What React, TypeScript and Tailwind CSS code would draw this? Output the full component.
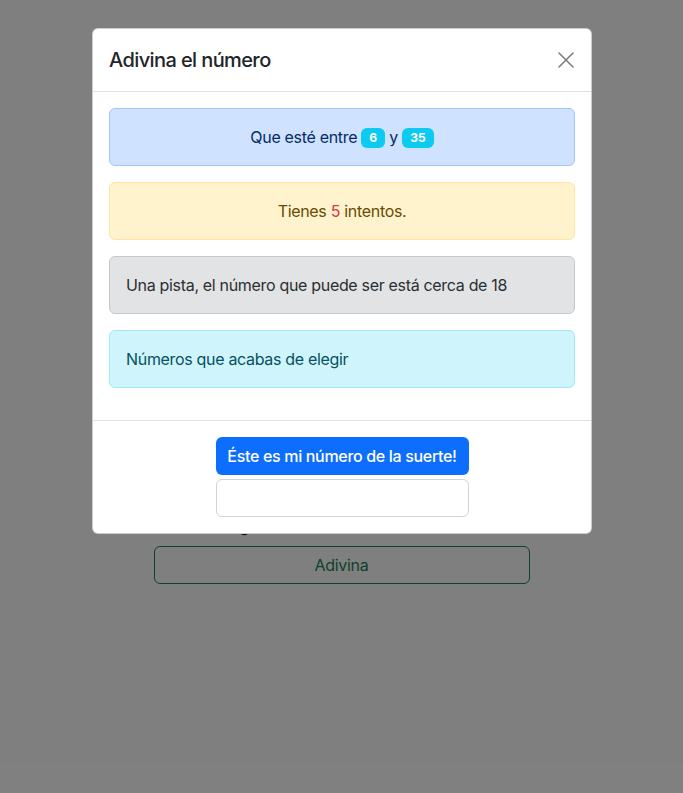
import React from "react";

const font = { fontFamily: "Inter, 'Noto Sans', sans-serif" };

function CloseIcon() {
  return (
    <svg width="16" height="16" viewBox="0 0 16 16" fill="none">
      <path d="M1 1L15 15M15 1L1 15" stroke="#000" strokeWidth="1.6" strokeLinecap="round" />
    </svg>
  );
}

export default function App() {
  return (
    <div className="relative h-[793px] overflow-hidden bg-white text-[#212529] tracking-[-0.02em]" style={font}>
      {/* page behind the modal */}
      <div className="mx-auto w-[376px] pt-[514px]">
        <p className="text-base leading-6 pl-[2px]">Número elegido</p>
        <button className="mt-2 h-[38px] w-full rounded-md border border-[#198754] text-base text-[#198754]">
          Adivina
        </button>
      </div>

      {/* backdrop */}
      <div className="absolute inset-0 bg-black/50" />

      {/* modal */}
      <div className="absolute inset-x-0 top-7 flex justify-center pl-[1px]">
        <div className="w-[500px] rounded-md border border-black/20 bg-white">
          <div className="flex items-center justify-between border-b border-[#dee2e6] p-4">
            <h5 className="text-[20px] font-medium leading-[30px] tracking-[-0.03em] text-[#212529]">Adivina el número</h5>
            <button className="mr-[-3px] p-1 opacity-50">
              <CloseIcon />
            </button>
          </div>

          <div className="flex flex-col gap-4 p-4 pb-8 text-base leading-6">
            <div className="rounded-md border border-[#9ec5fe] bg-[#cfe2ff] p-4 text-center text-[#052c65]">
              Que esté entre{" "}
              <span className="inline-block rounded-md bg-[#0dcaf0] px-[8px] py-[4px] align-[1px] text-xs font-bold leading-3 tracking-normal text-white">
                6
              </span>{" "}
              y{" "}
              <span className="inline-block rounded-md bg-[#0dcaf0] px-[8px] py-[4px] align-[1px] text-xs font-bold leading-3 tracking-normal text-white">
                35
              </span>
            </div>
            <div className="rounded-md border border-[#ffe69c] bg-[#fff3cd] p-4 text-center text-[#664d03]">
              Tienes <span className="text-[#dc3545]">5</span> intentos.
            </div>
            <div className="rounded-md border border-[#c4c8cb] bg-[#e2e3e5] p-4 text-[#2b2f32]">
              Una pista, el número que puede ser está cerca de 18
            </div>
            <div className="rounded-md border border-[#9eeaf9] bg-[#cff4fc] p-4 text-[#055160]">
              Números que acabas de elegir
            </div>
          </div>

          <div className="flex justify-center border-t border-[#dee2e6] p-3">
            <div className="m-1 flex w-[253px] flex-col gap-1">
              <button className="h-[38px] rounded-md bg-[#0d6efd] text-base font-medium text-white">
                Éste es mi número de la suerte!
              </button>
              <input className="h-[38px] rounded-md border border-[#ced4da] px-3 text-base outline-none" />
            </div>
          </div>
        </div>
      </div>
    </div>
  );
}
